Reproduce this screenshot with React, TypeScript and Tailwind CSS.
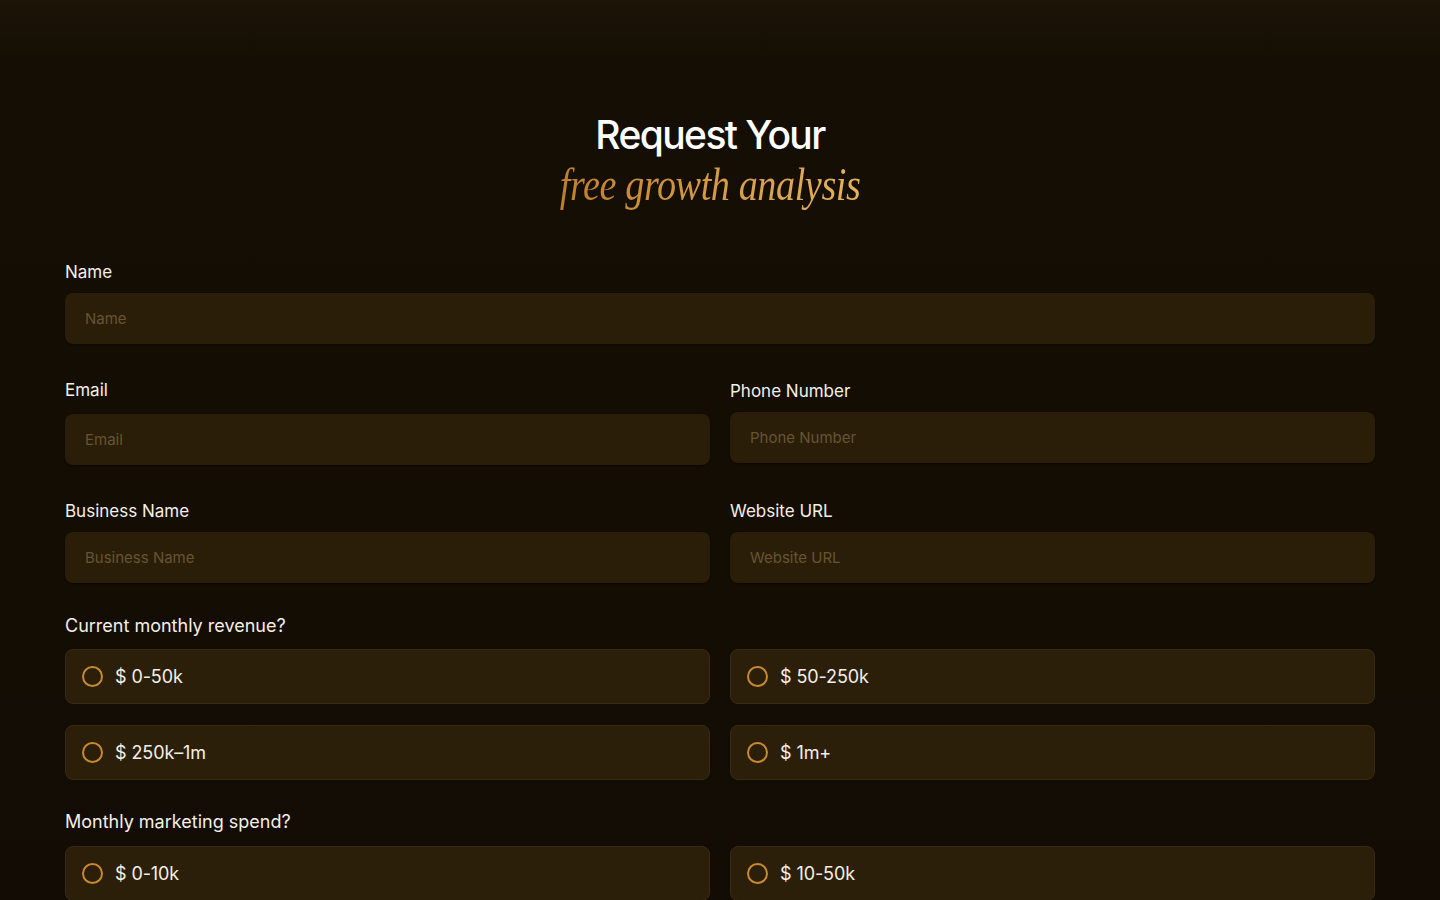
import React, { useState } from 'react';

const revenueOptions = ['$ 0-50k', '$ 50-250k', '$ 250k–1m', '$ 1m+'];
const spendOptions = ['$ 0-10k', '$ 10-50k'];

function Field({ label, placeholder, labelClass = 'mb-[10px]' }: { label: string; placeholder: string; labelClass?: string }) {
  return (
    <div className="flex flex-col">
      <label className={`text-[17px] text-[#f5efe6] leading-[22px] ${labelClass}`}>{label}</label>
      <input
        placeholder={placeholder}
        className="h-[51px] w-full rounded-[8px] bg-[#2a1e09] px-5 text-[15px] text-[#e8dcc6] placeholder:text-[#665433] outline-none shadow-[0_1px_2px_rgba(0,0,0,0.4)]"
      />
    </div>
  );
}

function RadioGroup({ name, options, value, onChange }: { name: string; options: string[]; value: string; onChange: (v: string) => void }) {
  return (
    <div className="grid grid-cols-2 gap-x-5 gap-y-[21px]">
      {options.map(opt => (
        <label
          key={opt}
          className="flex h-[55px] cursor-pointer items-center gap-3 rounded-[8px] border border-[#3a2b10] bg-[#2b1f0a] px-4"
        >
          <input type="radio" name={name} className="hidden" checked={value === opt} onChange={() => onChange(opt)} />
          <span className="flex h-[21px] w-[21px] items-center justify-center rounded-full border-2 border-[#c8892f]">
            {value === opt && <span className="h-[9px] w-[9px] rounded-full bg-[#c8892f]" />}
          </span>
          <span className="text-[18px] text-[#f5efe6] tracking-[-0.1px]">{opt}</span>
        </label>
      ))}
    </div>
  );
}

export default function App() {
  const [revenue, setRevenue] = useState('');
  const [spend, setSpend] = useState('');

  return (
    <div
      className="min-h-screen bg-[linear-gradient(180deg,#1c1406_0px,#140e04_60px,#120c04_100%)] pb-20"
      style={{ fontFamily: 'Inter, "Noto Sans", sans-serif' }}
    >
      <div className="mx-auto w-[1310px] pt-[110px]">
        <div className="pr-5 text-center">
          <h1 className="text-[39px] font-medium leading-[50px] tracking-[-1.6px] text-white">Request Your</h1>
          <div className="mt-[0px] flex justify-center">
            <p
              className="inline-block origin-center scale-x-[0.83] bg-[linear-gradient(90deg,#bd7f2c,#d69a45_50%,#e6b25c)] bg-clip-text text-[46px] italic leading-[50px] tracking-[-0.5px] text-transparent"
              style={{ fontFamily: '"Liberation Serif", "DejaVu Serif", serif' }}
            >
              free growth analysis
            </p>
          </div>
        </div>

        <form className="mt-[51px] flex flex-col">
          <Field label="Name" placeholder="Name" />

          <div className="mt-[35px] grid grid-cols-2 gap-x-5">
            <Field label="Email" placeholder="Email" labelClass="mb-[13px]" />
            <Field label="Phone Number" placeholder="Phone Number" labelClass="mt-[1px] mb-[10px]" />
          </div>

          <div className="mt-[35px] grid grid-cols-2 gap-x-5">
            <Field label="Business Name" placeholder="Business Name" />
            <Field label="Website URL" placeholder="Website URL" />
          </div>

          <div className="mt-[32px]">
            <div className="mb-[12px] text-[18px] leading-[22px] text-[#f5efe6]">Current monthly revenue?</div>
            <RadioGroup name="revenue" options={revenueOptions} value={revenue} onChange={setRevenue} />
          </div>

          <div className="mt-[31px]">
            <div className="mb-[13px] text-[18px] leading-[22px] text-[#f5efe6]">Monthly marketing spend?</div>
            <RadioGroup name="spend" options={spendOptions} value={spend} onChange={setSpend} />
          </div>
        </form>
      </div>
    </div>
  );
}
